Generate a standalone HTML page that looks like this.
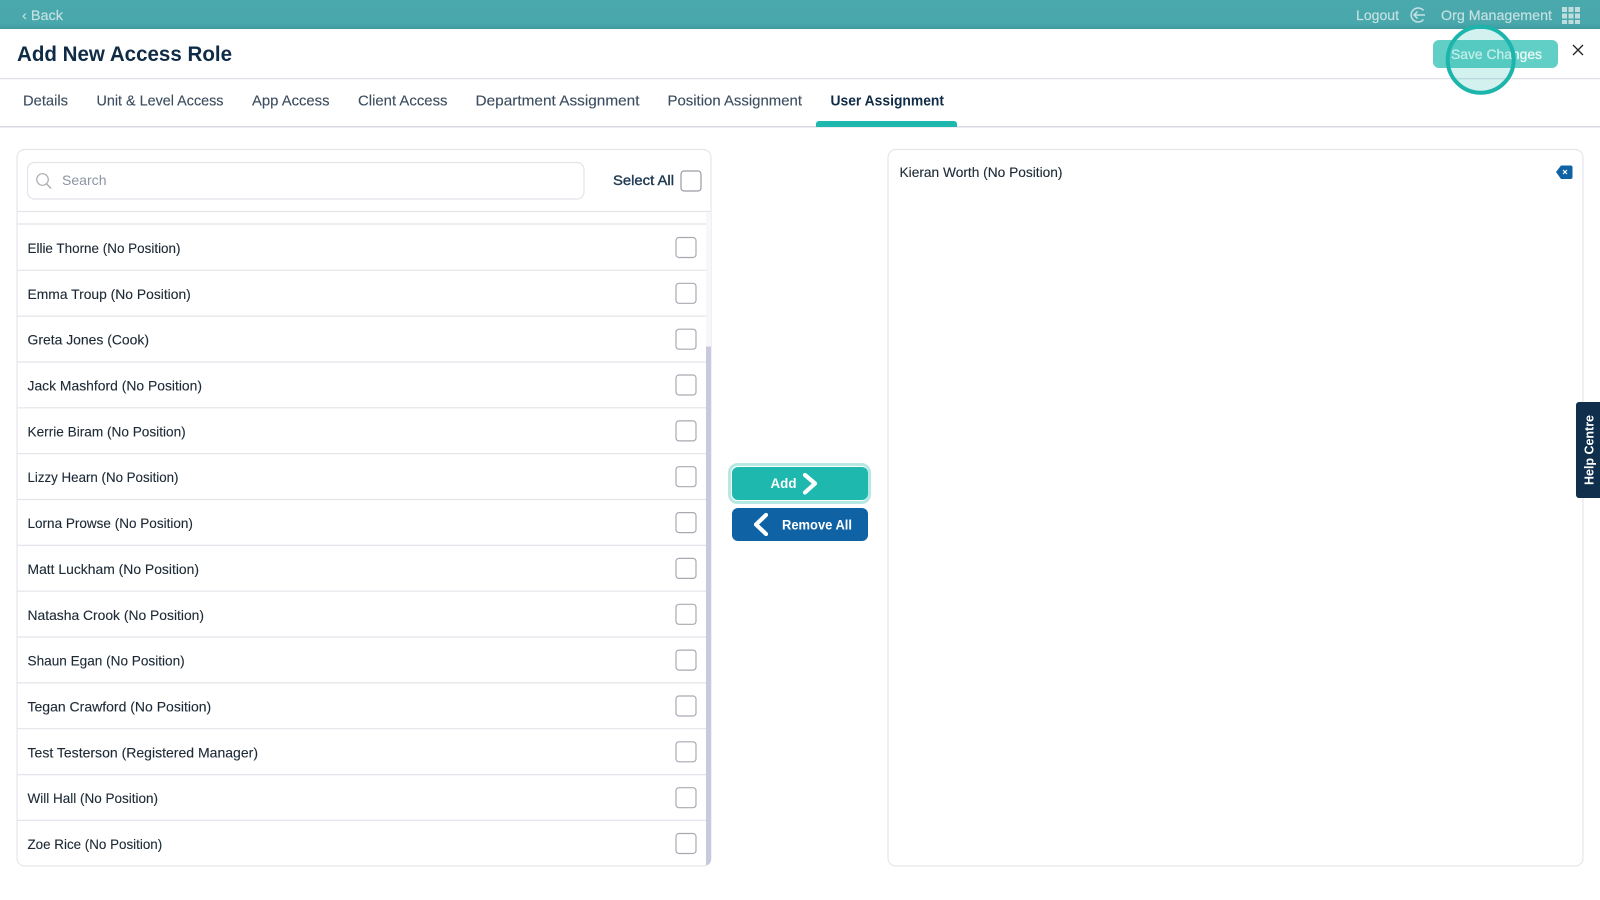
<!DOCTYPE html>
<html lang="en"><head><meta charset="utf-8"><title>Add New Access Role</title>
<style>
html,body{margin:0;padding:0;width:1600px;height:900px;overflow:hidden;background:#fff}
svg{display:block;position:absolute;left:0;top:0}
text{font-family:"Liberation Sans",Arial,sans-serif}
.row{font-size:14px;fill:#1d2a36;stroke:#1d2a36;stroke-width:.12}
.tab{font-size:14.5px;fill:#3b4c5e;stroke:#3b4c5e;stroke-width:.12}
.cb{fill:#fff;stroke:#a9a9b2;stroke-width:1.2}
.ln{stroke:#e4e4ea;stroke-width:1.2}
.bar{font-size:14px;fill:#c6e1e3;stroke:#c6e1e3;stroke-width:.15}
.btn{font-size:13.5px;font-weight:700;fill:#fff}
</style></head><body>
<svg width="1600" height="900" viewBox="0 0 1600 900" xmlns="http://www.w3.org/2000/svg">
<defs><linearGradient id="g" x1="0" y1="0" x2="0" y2="1"><stop offset="0" stop-color="#4aa9ad"/><stop offset=".8" stop-color="#49a8ac"/><stop offset="1" stop-color="#3f9a9e"/></linearGradient></defs>
<!-- top bar -->
<rect width="1600" height="29" fill="url(#g)"/>
<text x="22" y="20" class="bar" textLength="41" lengthAdjust="spacingAndGlyphs">&#8249; Back</text>
<text x="1356" y="20" class="bar" textLength="43" lengthAdjust="spacingAndGlyphs">Logout</text>
<path d="M1423.5 10.5A7 7 0 1 0 1423.5 19.5" fill="none" stroke="#c6e1e3" stroke-width="1.5"/>
<path d="M1425 15H1414M1417.5 11.5L1414 15L1417.5 18.5" fill="none" stroke="#c6e1e3" stroke-width="1.5"/>
<text x="1441" y="20" class="bar" textLength="111" lengthAdjust="spacingAndGlyphs">Org Management</text>
<g fill="#c0dcdd">
<rect x="1562" y="7" width="5" height="5"/><rect x="1568.5" y="7" width="5" height="5"/><rect x="1575" y="7" width="5" height="5"/>
<rect x="1562" y="13.5" width="5" height="5"/><rect x="1568.5" y="13.5" width="5" height="5"/><rect x="1575" y="13.5" width="5" height="5"/>
<rect x="1562" y="20" width="5" height="4"/><rect x="1568.5" y="20" width="5" height="4"/><rect x="1575" y="20" width="5" height="4"/>
</g>
<!-- title row -->
<text x="17" y="61" font-size="21" font-weight="700" fill="#0f2b46" textLength="215" lengthAdjust="spacingAndGlyphs">Add New Access Role</text>
<rect x="0" y="78" width="1600" height="1.3" fill="#e1e1e9"/>
<rect x="1433" y="40" width="125" height="28" rx="6" fill="#62cfc6"/>
<text x="1451" y="59" font-size="14" fill="#eafaf8" stroke="#eafaf8" stroke-width=".3" textLength="91" lengthAdjust="spacingAndGlyphs">Save Changes</text>
<path d="M1573 45L1583 55M1583 45L1573 55" stroke="#222" stroke-width="1.3" fill="none"/>
<!-- tabs -->
<text x="23" y="105.500" class="tab" textLength="45" lengthAdjust="spacingAndGlyphs">Details</text>
<text x="96.500" y="105.500" class="tab" textLength="127" lengthAdjust="spacingAndGlyphs">Unit &amp; Level Access</text>
<text x="252" y="105.500" class="tab" textLength="77.500" lengthAdjust="spacingAndGlyphs">App Access</text>
<text x="358" y="105.500" class="tab" textLength="89.500" lengthAdjust="spacingAndGlyphs">Client Access</text>
<text x="475.500" y="105.500" class="tab" textLength="164" lengthAdjust="spacingAndGlyphs">Department Assignment</text>
<text x="667.500" y="105.500" class="tab" textLength="134.500" lengthAdjust="spacingAndGlyphs">Position Assignment</text>
<text x="830.500" y="105.500" font-size="14.500" font-weight="700" fill="#0f2b46" textLength="113.500" lengthAdjust="spacingAndGlyphs">User Assignment</text>
<rect x="0" y="126" width="1600" height="1.500" fill="#d9d9e3"/>
<path d="M816 127V124a3 3 0 0 1 3-3H954a3 3 0 0 1 3 3V127Z" fill="#1fb8ae"/>
<!-- left card -->
<rect x="17" y="149.500" width="694" height="716.500" rx="8" fill="#fff" stroke="#e6e6ec" stroke-width="1.200"/>
<rect x="27.500" y="162.500" width="556.500" height="36.500" rx="7" fill="#fff" stroke="#e4e4ea" stroke-width="1.200"/>
<circle cx="42.500" cy="179.500" r="5.800" fill="none" stroke="#a8adb4" stroke-width="1.200"/>
<path d="M46.800 184L51 188.500" stroke="#a8adb4" stroke-width="1.300" fill="none"/>
<text x="62" y="185" font-size="14" fill="#8d94a3" textLength="44.500" lengthAdjust="spacingAndGlyphs">Search</text>
<text x="613" y="185" font-size="14" fill="#1f3a52" stroke="#1f3a52" stroke-width=".4" textLength="61" lengthAdjust="spacingAndGlyphs">Select All</text>
<rect x="681" y="171" width="20" height="20" rx="3" fill="#fff" stroke="#9a9aa4" stroke-width="1.200"/>
<path class="ln" d="M17 211.500H711"/>
<path class="ln" d="M17 224H706M17 270.300H706M17 316.100H706M17 362H706M17 407.800H706M17 453.700H706M17 499.500H706M17 545.400H706M17 591.200H706M17 637H706M17 682.900H706M17 728.700H706M17 774.600H706M17 820.400H706"/>
<path d="M706 212H711V860a6 6 0 0 1-6 6H706Z" fill="#f7f7fa"/>
<path d="M706 346.500H711V860a6 6 0 0 1-5 5.500Z" fill="#c9c9dd"/>
<text x="27.500" y="253" class="row" textLength="153" lengthAdjust="spacingAndGlyphs">Ellie Thorne (No Position)</text>
<text x="27.500" y="298.800" class="row" textLength="163.300" lengthAdjust="spacingAndGlyphs">Emma Troup (No Position)</text>
<text x="27.500" y="344.700" class="row" textLength="121.500" lengthAdjust="spacingAndGlyphs">Greta Jones (Cook)</text>
<text x="27.500" y="390.500" class="row" textLength="174.500" lengthAdjust="spacingAndGlyphs">Jack Mashford (No Position)</text>
<text x="27.500" y="436.400" class="row" textLength="158.200" lengthAdjust="spacingAndGlyphs">Kerrie Biram (No Position)</text>
<text x="27.500" y="482.200" class="row" textLength="151" lengthAdjust="spacingAndGlyphs">Lizzy Hearn (No Position)</text>
<text x="27.500" y="528.100" class="row" textLength="165.400" lengthAdjust="spacingAndGlyphs">Lorna Prowse (No Position)</text>
<text x="27.500" y="573.900" class="row" textLength="171.500" lengthAdjust="spacingAndGlyphs">Matt Luckham (No Position)</text>
<text x="27.500" y="619.800" class="row" textLength="176.500" lengthAdjust="spacingAndGlyphs">Natasha Crook (No Position)</text>
<text x="27.500" y="665.600" class="row" textLength="157.200" lengthAdjust="spacingAndGlyphs">Shaun Egan (No Position)</text>
<text x="27.500" y="711.500" class="row" textLength="183.700" lengthAdjust="spacingAndGlyphs">Tegan Crawford (No Position)</text>
<text x="27.500" y="757.300" class="row" textLength="230.500" lengthAdjust="spacingAndGlyphs">Test Testerson (Registered Manager)</text>
<text x="27.500" y="803.200" class="row" textLength="130.500" lengthAdjust="spacingAndGlyphs">Will Hall (No Position)</text>
<text x="27.500" y="849" class="row" textLength="134.700" lengthAdjust="spacingAndGlyphs">Zoe Rice (No Position)</text>
<g class="cb">
<rect x="676" y="237.500" width="20" height="20" rx="3"/><rect x="676" y="283.300" width="20" height="20" rx="3"/><rect x="676" y="329.200" width="20" height="20" rx="3"/><rect x="676" y="375" width="20" height="20" rx="3"/><rect x="676" y="420.900" width="20" height="20" rx="3"/><rect x="676" y="466.700" width="20" height="20" rx="3"/><rect x="676" y="512.600" width="20" height="20" rx="3"/><rect x="676" y="558.400" width="20" height="20" rx="3"/><rect x="676" y="604.300" width="20" height="20" rx="3"/><rect x="676" y="650.100" width="20" height="20" rx="3"/><rect x="676" y="696" width="20" height="20" rx="3"/><rect x="676" y="741.800" width="20" height="20" rx="3"/><rect x="676" y="787.700" width="20" height="20" rx="3"/><rect x="676" y="833.500" width="20" height="20" rx="3"/>
</g>
<!-- middle buttons -->
<rect x="729.500" y="464.500" width="140" height="38" rx="8" fill="#fff" stroke="#b8e8e4" stroke-width="3"/>
<rect x="732" y="467" width="136" height="33" rx="6" fill="#1fb8ae"/>
<text x="770.500" y="488" class="btn" textLength="26" lengthAdjust="spacingAndGlyphs">Add</text>
<path d="M805 475L815 483.500L805 492.500" fill="none" stroke="#fff" stroke-width="4.200" stroke-linecap="round" stroke-linejoin="round"/>
<rect x="732" y="508" width="136" height="33" rx="6" fill="#0f62a3"/>
<path d="M766 515L756 524.500L766 534" fill="none" stroke="#fff" stroke-width="4.200" stroke-linecap="round" stroke-linejoin="round"/>
<text x="782" y="529.500" class="btn" textLength="70" lengthAdjust="spacingAndGlyphs">Remove All</text>
<!-- right card -->
<rect x="888" y="149.500" width="695" height="716.500" rx="8" fill="#fff" stroke="#e6e6ec" stroke-width="1.200"/>
<text x="899.500" y="177" class="row" textLength="163" lengthAdjust="spacingAndGlyphs">Kieran Worth (No Position)</text>
<path d="M1556 172L1561 165.500H1570.500a2 2 0 0 1 2 2V177a2 2 0 0 1-2 2H1561Z" fill="#0f62a3"/>
<path d="M1563 170L1567 174M1567 170L1563 174" stroke="#fff" stroke-width="1.200"/>
<!-- help centre -->
<path d="M1600 402H1579a3 3 0 0 0-3 3V495a3 3 0 0 0 3 3H1600Z" fill="#0f2f4c"/>
<text transform="translate(1593.500 485) rotate(-90)" font-size="12.500" font-weight="700" fill="#fff" textLength="70" lengthAdjust="spacingAndGlyphs">Help Centre</text>
<!-- click indicator -->
<circle cx="1480.700" cy="59.700" r="33" fill="#1fb8ae" fill-opacity=".2" stroke="#1db5ab" stroke-width="4"/>
</svg>
</body></html>
